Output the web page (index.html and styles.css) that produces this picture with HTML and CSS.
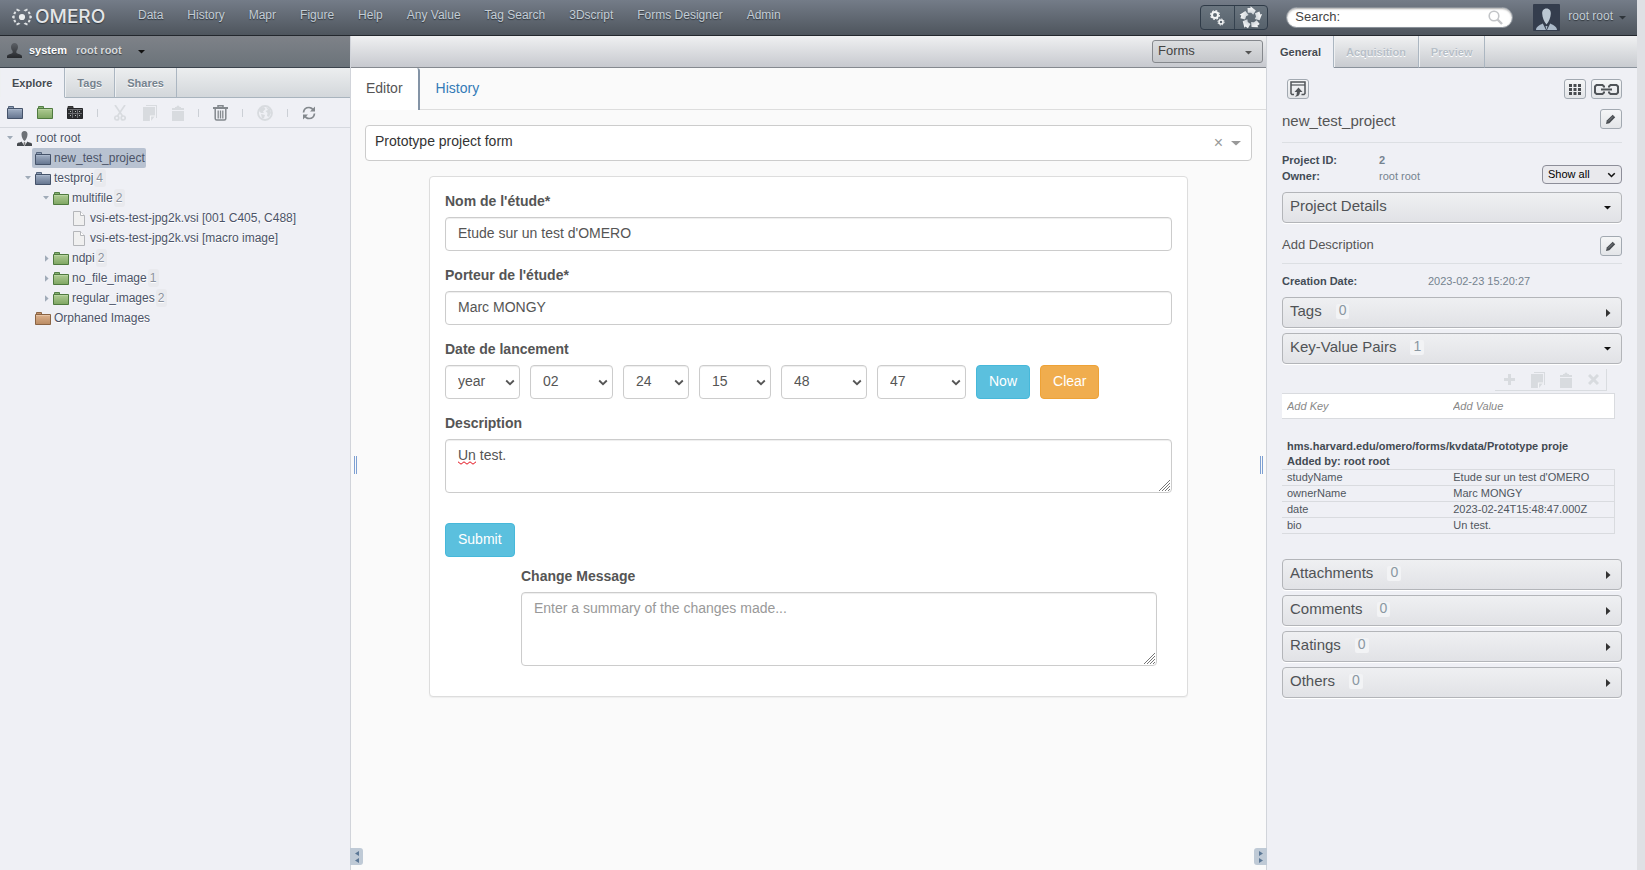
FILE: index.html
```html
<!DOCTYPE html>
<html lang="en">
<head>
<meta charset="utf-8">
<title>OMERO.web</title>
<link rel="stylesheet" href="styles.css">
</head>
<body>
<svg class="defs" aria-hidden="true">
  <defs>
    <linearGradient id="g-blue" x1="0" y1="0" x2="0" y2="1"><stop offset="0" stop-color="#a3b1c6"/><stop offset="1" stop-color="#64748e"/></linearGradient>
    <linearGradient id="g-green" x1="0" y1="0" x2="0" y2="1"><stop offset="0" stop-color="#b0cc94"/><stop offset="1" stop-color="#7ea662"/></linearGradient>
    <linearGradient id="g-tan" x1="0" y1="0" x2="0" y2="1"><stop offset="0" stop-color="#deb48f"/><stop offset="1" stop-color="#b98a62"/></linearGradient>
    <linearGradient id="g-dark" x1="0" y1="0" x2="0" y2="1"><stop offset="0" stop-color="#5c6066"/><stop offset="1" stop-color="#26292d"/></linearGradient>
    <linearGradient id="g-light" x1="0" y1="0" x2="0" y2="1"><stop offset="0" stop-color="#fff"/><stop offset="1" stop-color="#c6cdd3"/></linearGradient>
    <symbol id="folder-blue" viewBox="0 0 16 13"><path d="M1.500 3V.5h5V2.500" fill="#8b9cb4" stroke="#56657c"/><path d="M.5 2.500h15v10H.5z" fill="url(#g-blue)" stroke="#45536a"/><path d="M1 3.500h14" stroke="#a9b7cb"/></symbol>
    <symbol id="folder-green" viewBox="0 0 16 13"><path d="M1.500 3V.5h5V2.500" fill="#86b070" stroke="#558048"/><path d="M.5 2.500h15v10H.5z" fill="url(#g-green)" stroke="#4f7a3f"/><path d="M1 3.500h14" stroke="#b9d4a2"/></symbol>
    <symbol id="folder-tan" viewBox="0 0 16 13"><path d="M1.500 3V.5h5V2.500" fill="#c4936a" stroke="#8d6747"/><path d="M.5 2.500h15v10H.5z" fill="url(#g-tan)" stroke="#8a6444"/><path d="M1 3.500h14" stroke="#e6c3a4"/></symbol>
    <symbol id="folder-screen" viewBox="0 0 16 13"><path d="M1 3V.5h5V2.500" fill="#444" stroke="#333"/><path d="M.5 2.500h15v10H.5z" fill="#2c2e31" stroke="#232427"/><path d="M3 5h1v1H3zM8 5h1v1H8zM12 5h1v1h-1zM3 9h1v1H3zM8 9h1v1H8zM12 9h1v1h-1z" fill="#b9bfb8"/><path d="M5.500 3v9M10.500 3v9M1 7.500h14M1 3.500h14" stroke="#6b6c70"/></symbol>
    <symbol id="file" viewBox="0 0 12 15"><path d="M.5.5h7l4 4v10H.5z" fill="#f0f0f0" stroke="#b4b6ba"/><path d="M7.500.5v4h4" fill="#fff" stroke="#b4b6ba"/></symbol>
    <symbol id="person" viewBox="0 0 15 15"><path d="M7.500 0c2.300 0 3.600 1.700 3.500 4-.1 2-.9 3.300-1.600 4v2c1.500 1 5.600 1.200 5.600 3.500V15H0v-1.500C0 11.200 4.100 11 5.600 10V8C4.900 7.300 4 6 4 4c0-2.300 1.300-4 3.500-4z" fill="url(#g-dark)"/></symbol>
    <symbol id="user" viewBox="0 0 15 15"><path d="M7.500 0C9.500 0 10.600 1.400 10.500 3.500 10.400 6 9.200 9 7.500 10 5.800 9 4.600 6 4.500 3.500 4.400 1.400 5.500 0 7.500 0z" fill="#6d7176"/><path d="M0 15v-2c0-1.500 3-1.300 4.500-2.500L7.500 15zM15 15v-2c0-1.500-3-1.300-4.500-2.500L7.500 15z" fill="#45494e"/><path d="M7.500 10.500L8.500 12 7.500 15 6.500 12z" fill="#777"/></symbol>
    <symbol id="down" viewBox="0 0 8 5" preserveAspectRatio="none"><path d="M0 0h8L4 4.500z" fill="currentColor"/></symbol>
    <symbol id="right" viewBox="0 0 5 8"><path d="M0 0v8l4.500-4z" fill="currentColor"/></symbol>
    <symbol id="chevron" viewBox="0 0 10 7"><path d="M1.200 1.500L5 5.200l3.800-3.700" fill="none" stroke="currentColor" stroke-width="1.800"/></symbol>
    <symbol id="grip" viewBox="0 0 11 11"><path d="M0 11L11 0M3 11l8-8M6 11l5-5M9 11l2-2" stroke="#777" fill="none"/></symbol>
    <symbol id="pencil" viewBox="0 0 10 10"><path d="M0 10l.8-3.400L6.700.8 9.200 3.300 3.400 9.200z" fill="#484c50"/><path d="M2 7.500l5-5" stroke="#8d9196" stroke-width=".8"/></symbol>
    <symbol id="copy" viewBox="0 0 14 16"><path d="M3 0h11v13h-1V1H3z" fill="currentColor"/><path d="M0 2h12v9l-4 5H0z" fill="currentColor"/><path d="M7.500 16v-5H12" fill="none" stroke="#f4f5f7" stroke-width="1.200"/></symbol>
    <symbol id="paste" viewBox="0 0 12 16"><path d="M0 6h12v10H0zM0 3h3V2h1.500a1.500 1.500 0 0 1 3 0H9v1h3v2H0z" fill="currentColor"/></symbol>
  </defs>
</svg>

<div class="page">
  <header class="topbar">
    <a class="logo" href="#" aria-label="OMERO">
      <svg width="20" height="18" viewBox="0 0 20 18" aria-hidden="true">
        <circle cx="10" cy="9" r="3.100" fill="#eceeef"/>
        <g fill="#e0e3e5">
          <path d="M8.500 2.300L4.800.6l-.6 1.600L6.500 3.500zM11.500 2.300L15.200.6l.6 1.600-2.300 1.300zM8.500 15.700l-3.700 1.700-.6-1.600 2.300-1.300zM11.500 15.700l3.700 1.700.6-1.600-2.300-1.300z"/>
          <path d="M2.300 7.300Q3.300 9 2.300 10.700L.2 10V8zM17.700 7.300q-1 1.700 0 3.400L19.800 10V8z"/>
          <path d="M1.200 5.600l1.600-2.300 1.400.9-1 2.200zM18.800 5.600l-1.600-2.300-1.400.9 1 2.200zM1.200 12.400l1.600 2.300 1.400-.9-1-2.200zM18.800 12.400l-1.600 2.300-1.400-.9 1-2.200z"/>
        </g>
      </svg>
      <span class="logo-text">OMERO</span>
    </a>
    <nav class="mainnav">
      <a href="#">Data</a><a href="#">History</a><a href="#">Mapr</a><a href="#">Figure</a><a href="#">Help</a><a href="#">Any Value</a><a href="#">Tag Search</a><a href="#">3Dscript</a><a href="#">Forms Designer</a><a href="#">Admin</a>
    </nav>
    <div class="tools">
      <button type="button" aria-label="Scripts">
        <svg width="15" height="16" viewBox="0 0 15 16" fill="none" aria-hidden="true"><circle cx="5" cy="5" r="3" stroke="#f4f6f7" stroke-width="2"/><circle cx="5" cy="5" r="4.400" stroke="#f4f6f7" stroke-width="1.200" stroke-dasharray="1.800 1.650"/><circle cx="11" cy="12" r="2" stroke="#f4f6f7" stroke-width="1.500"/><circle cx="11" cy="12" r="3.100" stroke="#f4f6f7" stroke-dasharray="1.300 1.130"/></svg>
      </button>
      <button type="button" aria-label="Activities">
        <svg width="24" height="23" viewBox="0 0 24 23" fill="url(#g-light)" aria-hidden="true"><g id="piece"><path d="M8.500 2h3V.2l5.300 4.300-2.600 4.300-2-2H8.800z"/></g><use href="#piece" transform="rotate(72 12 12)"/><use href="#piece" transform="rotate(144 12 12)"/><use href="#piece" transform="rotate(216 12 12)"/><use href="#piece" transform="rotate(288 12 12)"/></svg>
      </button>
    </div>
    <form class="search">
      <input type="text" value="Search:" aria-label="Search">
      <svg width="15" height="15" viewBox="0 0 15 15" aria-hidden="true"><circle cx="6" cy="6" r="4.800" fill="none" stroke="#c3c5c8" stroke-width="1.600"/><path d="M9.500 9.500l4.500 4.500" stroke="#c3c5c8" stroke-width="2.400"/></svg>
    </form>
    <button type="button" class="account">
      <svg class="avatar" width="27" height="27" viewBox="0 0 27 27" aria-hidden="true"><rect width="27" height="27" rx="1" fill="#343d4d"/><path d="M13.500 4.500c3 0 4.500 2.300 4.300 5.300-.2 3.800-1.600 7.500-4.300 10.700-2.700-3.200-4.100-6.900-4.300-10.700-.2-3 1.300-5.300 4.300-5.300z" fill="#bcc8d3"/><path d="M3 26c.3-3.500 3-4.500 6.800-6.500L13 26zM24 26c-.3-3.500-3-4.500-6.800-6.500L14 26zM12.500 22h2l-1 4z" fill="#aab9c9"/></svg>
      <span>root root</span>
      <svg class="dark" width="7" height="4"><use href="#down"/></svg>
    </button>
  </header>

  <div class="columns">
    <aside class="left">
      <button type="button" class="group">
        <svg width="15" height="15"><use href="#person"/></svg>
        <strong>system</strong>
        <span>root root</span>
        <svg class="black" width="7" height="4"><use href="#down"/></svg>
      </button>
      <nav class="tabs left-tabs"><a class="active" href="#">Explore</a><a href="#">Tags</a><a href="#">Shares</a></nav>
      <div class="toolbar">
        <button type="button" aria-label="New project"><svg width="16" height="13"><use href="#folder-blue"/></svg></button>
        <button type="button" aria-label="New dataset"><svg width="16" height="13"><use href="#folder-green"/></svg></button>
        <button type="button" aria-label="New screen"><svg width="16" height="13"><use href="#folder-screen"/></svg></button>
        <i class="sep"></i>
        <button type="button" aria-label="Cut" disabled><svg width="12" height="16" viewBox="0 0 12 16" fill="none" stroke="currentColor" stroke-width="1.700"><path d="M1 0l7.500 11M11 0L3.500 11"/><circle cx="2.800" cy="13" r="2"/><circle cx="9.200" cy="13" r="2"/></svg></button>
        <button type="button" aria-label="Copy" disabled><svg width="14" height="16"><use href="#copy"/></svg></button>
        <button type="button" class="tight" aria-label="Paste" disabled><svg width="12" height="16"><use href="#paste"/></svg></button>
        <i class="sep"></i>
        <button type="button" class="grey tight" aria-label="Delete"><svg width="15" height="16" viewBox="0 0 15 16" fill="none" stroke="currentColor"><path d="M0 3h15" stroke-width="2"/><path d="M5 2V.7h5V2M2.200 4v9.500q0 1.500 1.500 1.500h7.600q1.500 0 1.500-1.500V4" stroke-width="1.500"/><path d="M5.200 5.500v8M7.500 5.500v8M9.800 5.500v8" stroke-width="1.300"/></svg></button>
        <i class="sep"></i>
        <button type="button" aria-label="Web link" disabled><svg width="16" height="16" viewBox="0 0 16 16"><circle cx="8" cy="8" r="7" fill="none" stroke="currentColor" stroke-width="1.800"/><path d="M3 3l4-1 1.500 2L6 6.500 7 8H4L2 6zM9 2.500L13 4l1 4-2 4-2-1 .5-3L8.500 6 11 5zM4 9l4 1-1 3-2 .5z" fill="currentColor"/></svg></button>
        <i class="sep"></i>
        <button type="button" class="grey tight" aria-label="Refresh"><svg width="14" height="14" viewBox="0 0 14 14" fill="none" stroke="currentColor" stroke-width="1.700"><path d="M1.500 6.500Q2 1.500 7 1.500q3 0 4.500 3M12.500 7.500q-.5 5-5.500 5-3 0-4.500-3"/><path d="M13 .5v5H8zM1 13.500v-5h5z" fill="currentColor" stroke="none"/></svg></button>
      </div>
      <ul class="tree">
        <li class="row"><span class="twist"><svg width="6" height="4"><use href="#down"/></svg></span><svg width="15" height="15"><use href="#user"/></svg><span>root root</span></li>
        <li class="row l1"><span class="twist"></span><a class="node selected" href="#"><svg width="16" height="13"><use href="#folder-blue"/></svg>new_test_project</a></li>
        <li class="row l1"><span class="twist"><svg width="6" height="4"><use href="#down"/></svg></span><a class="node" href="#"><svg width="16" height="13"><use href="#folder-blue"/></svg>testproj</a><span class="count">4</span></li>
        <li class="row l2"><span class="twist"><svg width="6" height="4"><use href="#down"/></svg></span><a class="node" href="#"><svg width="16" height="13"><use href="#folder-green"/></svg>multifile</a><span class="count">2</span></li>
        <li class="row l3"><span class="twist"></span><a class="node" href="#"><svg width="16" height="15"><use href="#file"/></svg>vsi-ets-test-jpg2k.vsi [001 C405, C488]</a></li>
        <li class="row l3"><span class="twist"></span><a class="node" href="#"><svg width="16" height="15"><use href="#file"/></svg>vsi-ets-test-jpg2k.vsi [macro image]</a></li>
        <li class="row l2"><span class="twist"><svg width="4" height="7"><use href="#right"/></svg></span><a class="node" href="#"><svg width="16" height="13"><use href="#folder-green"/></svg>ndpi</a><span class="count">2</span></li>
        <li class="row l2"><span class="twist"><svg width="4" height="7"><use href="#right"/></svg></span><a class="node" href="#"><svg width="16" height="13"><use href="#folder-green"/></svg>no_file_image</a><span class="count">1</span></li>
        <li class="row l2"><span class="twist"><svg width="4" height="7"><use href="#right"/></svg></span><a class="node" href="#"><svg width="16" height="13"><use href="#folder-green"/></svg>regular_images</a><span class="count">2</span></li>
        <li class="row l1"><span class="twist"></span><a class="node" href="#"><svg width="16" height="13"><use href="#folder-tan"/></svg>Orphaned Images</a></li>
      </ul>
    </aside>

    <main class="center">
      <div class="plugin-bar">
        <span class="pick plugin"><select aria-label="Center panel"><option>Forms</option></select><svg width="7" height="4"><use href="#down"/></svg></span>
      </div>
      <nav class="form-tabs"><a class="active" href="#">Editor</a><a href="#">History</a></nav>
      <div class="form-area">
        <div class="form-select">
          <input type="text" value="Prototype project form" aria-label="Form">
          <button type="button" aria-label="Clear form">×</button>
          <svg width="10" height="5"><use href="#down"/></svg>
        </div>
        <form class="panel">
          <div class="field">
            <label for="study">Nom de l'étude*</label>
            <input id="study" class="control" type="text" value="Etude sur un test d'OMERO">
          </div>
          <div class="field">
            <label for="owner">Porteur de l'étude*</label>
            <input id="owner" class="control" type="text" value="Marc MONGY">
          </div>
          <div class="field">
            <label for="year">Date de lancement</label>
            <div class="date">
              <span class="pick w-year"><select id="year" class="control"><option>year</option></select><svg width="10" height="7"><use href="#chevron"/></svg></span>
              <span class="pick w-month"><select class="control" aria-label="Month"><option>02</option></select><svg width="10" height="7"><use href="#chevron"/></svg></span>
              <span class="pick w-day"><select class="control" aria-label="Day"><option>24</option></select><svg width="10" height="7"><use href="#chevron"/></svg></span>
              <span class="pick w-hour"><select class="control" aria-label="Hour"><option>15</option></select><svg width="10" height="7"><use href="#chevron"/></svg></span>
              <span class="pick w-minute"><select class="control" aria-label="Minute"><option>48</option></select><svg width="10" height="7"><use href="#chevron"/></svg></span>
              <span class="pick w-second"><select class="control" aria-label="Second"><option>47</option></select><svg width="10" height="7"><use href="#chevron"/></svg></span>
              <button type="button" class="btn info">Now</button>
              <button type="button" class="btn warning">Clear</button>
            </div>
          </div>
          <div class="field">
            <label for="bio">Description</label>
            <div class="area">
              <textarea id="bio" class="control" rows="2" spellcheck="false">Un test.</textarea>
              <svg class="squiggle" width="18" height="4" viewBox="0 0 18 4"><path d="M0 .8l3 2.400 3-2.400 3 2.400 3-2.400 3 2.400 3-2.400" fill="none" stroke="#e3101c"/></svg>
              <svg class="grip" width="11" height="11"><use href="#grip"/></svg>
            </div>
          </div>
          <div class="submit"><button type="button" class="btn info">Submit</button></div>
          <div class="message">
            <label for="msg">Change Message</label>
            <div class="area">
              <textarea id="msg" class="control" rows="3" placeholder="Enter a summary of the changes made..."></textarea>
              <svg class="grip" width="11" height="11"><use href="#grip"/></svg>
            </div>
          </div>
        </form>
      </div>
      <i class="handle handle-left"></i>
      <i class="handle handle-right"></i>
      <button type="button" class="toggle toggle-left" aria-label="Collapse left panel"><svg width="4" height="12" viewBox="0 0 4 12"><path d="M4 0v5L0 2.500zM4 7v5L0 9.500z" fill="#5c7896"/></svg></button>
      <button type="button" class="toggle toggle-right" aria-label="Collapse right panel"><svg width="4" height="12" viewBox="0 0 4 12"><path d="M0 0v5l4-2.500zM0 7v5l4-2.500z" fill="#5c7896"/></svg></button>
    </main>

    <aside class="right">
      <nav class="tabs right-tabs"><a class="active" href="#">General</a><a class="off" href="#">Acquisition</a><a class="off" href="#">Preview</a></nav>
      <div class="details">
        <div class="actions">
          <button type="button" class="icon-btn" aria-label="Open with"><svg width="16" height="16" viewBox="0 0 16 16" fill="none" stroke="#505458"><path d="M4 13.500H2L1 12.500V1h14v11.500l-1 1h-2.500" stroke-width="1.500"/><path d="M1 4h14" stroke-width="1.200"/><path d="M8.500 6.500l4 4.500h-2.600Q10 15.500 5 15.700 7.200 14 6.900 11H4.500z" fill="#505458" stroke="none"/></svg></button>
          <span class="spacer"></span>
          <button type="button" class="icon-btn" aria-label="Bulk annotations"><svg width="12" height="11" viewBox="0 0 12 11" fill="#484b4f"><path d="M0 0h3v3H0zM4.500 0h3v3h-3zM9 0h3v3H9zM0 4h3v3H0zM4.500 4h3v3h-3zM9 4h3v3H9zM0 8h3v3H0zM4.500 8h3v3h-3zM9 8h3v3H9z"/></svg></button>
          <button type="button" class="icon-btn wide" aria-label="Link"><svg width="25" height="11" viewBox="0 0 25 11" fill="none" stroke="#505458" stroke-width="2"><path d="M10 3.500V2.500L8.500 1H2.500L1 2.500v6L2.500 10h6L10 8.500v-1M15 3.500V2.500L16.500 1h6L24 2.500v6L22.500 10h-6L15 8.500v-1M7 5.500h11"/></svg></button>
        </div>
        <div class="line title"><h1>new_test_project</h1><button type="button" class="icon-btn" aria-label="Edit name"><svg width="10" height="10"><use href="#pencil"/></svg></button></div>
        <div class="meta">
          <dl><dt>Project ID:</dt><dd><b>2</b></dd><dt>Owner:</dt><dd>root root</dd></dl>
          <span class="pick show"><select aria-label="Annotations shown"><option>Show all</option></select><svg width="9" height="6"><use href="#chevron"/></svg></span>
        </div>
        <button type="button" class="section first">Project Details<svg class="black" width="7" height="4"><use href="#down"/></svg></button>
        <div class="line desc"><span>Add Description</span><button type="button" class="icon-btn" aria-label="Edit description"><svg width="10" height="10"><use href="#pencil"/></svg></button></div>
        <dl class="created"><dt>Creation Date:</dt><dd>2023-02-23 15:20:27</dd></dl>
        <button type="button" class="section">Tags<span class="num">0</span><svg width="5" height="8"><use href="#right"/></svg></button>
        <button type="button" class="section">Key-Value Pairs<span class="num">1</span><svg class="black" width="7" height="4"><use href="#down"/></svg></button>
        <div class="kv-tools">
          <button type="button" disabled aria-label="Add"><svg width="11" height="11" viewBox="0 0 11 11"><path d="M5.500 0v11M0 5.500h11" stroke="currentColor" stroke-width="3"/></svg></button>
          <button type="button" disabled aria-label="Copy"><svg width="14" height="16"><use href="#copy"/></svg></button>
          <button type="button" disabled aria-label="Paste"><svg width="12" height="16"><use href="#paste"/></svg></button>
          <button type="button" disabled aria-label="Delete"><svg width="11" height="11" viewBox="0 0 11 11"><path d="M1 1l9 9M10 1l-9 9" stroke="currentColor" stroke-width="3"/></svg></button>
        </div>
        <div class="kv-add"><input type="text" placeholder="Add Key" aria-label="Add Key"><input type="text" placeholder="Add Value" aria-label="Add Value"></div>
        <table class="kv">
          <caption>hms.harvard.edu/omero/forms/kvdata/Prototype proje<br>Added by: root root</caption>
          <tbody>
            <tr><td>studyName</td><td>Etude sur un test d'OMERO</td></tr>
            <tr><td>ownerName</td><td>Marc MONGY</td></tr>
            <tr><td>date</td><td>2023-02-24T15:48:47.000Z</td></tr>
            <tr><td>bio</td><td>Un test.</td></tr>
          </tbody>
        </table>
        <button type="button" class="section">Attachments<span class="num">0</span><svg width="5" height="8"><use href="#right"/></svg></button>
        <button type="button" class="section">Comments<span class="num">0</span><svg width="5" height="8"><use href="#right"/></svg></button>
        <button type="button" class="section">Ratings<span class="num">0</span><svg width="5" height="8"><use href="#right"/></svg></button>
        <button type="button" class="section">Others<span class="num">0</span><svg width="5" height="8"><use href="#right"/></svg></button>
      </div>
    </aside>
  </div>
</div>
</body>
</html>
```
FILE: styles.css
```css
* { box-sizing: border-box; }
body {
  margin: 0;
  padding-right: 8px;
  background: #dfe0e4;
  color: #4b5367;
  font: 12px/20px "Liberation Sans", Arial, sans-serif;
}
button, input, select, textarea { font: inherit; color: inherit; margin: 0; }
button { background: none; border: 0; padding: 0; }
select { appearance: none; }
a { color: inherit; text-decoration: none; }
svg { display: block; flex: none; }
.defs { position: absolute; width: 0; height: 0; }
.page { display: flex; flex-direction: column; min-height: 100vh; }

/* top bar */
.topbar {
  display: flex;
  align-items: center;
  height: 36px;
  background: linear-gradient(#747c88, #4e555d);
  border-bottom: 1px solid #23272d;
  color: #c3cdd6;
  text-shadow: 0 1px 1px #30363c;
}
.logo { display: flex; align-items: center; gap: 3px; width: 126px; padding: 0 0 2px 12px; }
.logo-text { font: 500 19px/20px Inter, sans-serif; color: #e4e6e8; }
.mainnav { display: flex; flex: 1; padding-bottom: 5px; }
.mainnav a { padding: 0 12px; white-space: nowrap; }
.tools { display: flex; height: 25px; border: 1px solid #2f3b48; border-radius: 4px; background: linear-gradient(#6a757f, #56616b); }
.tools button { display: flex; align-items: center; justify-content: center; width: 33px; }
.tools button + button { border-left: 1px solid #35424f; }
.search {
  display: flex;
  align-items: center;
  width: 227px;
  height: 21px;
  margin-left: 18px;
  padding: 0 9px 0 8px;
  background: #fff;
  border: 1px solid #8a9199;
  border-radius: 11px;
  box-shadow: inset 0 1px 2px #aaa;
}
.search input { flex: 1; min-width: 0; border: 0; padding: 0 0 1px; background: none; font-size: 13px; color: #444; outline: 0; }
.account { display: flex; align-items: center; margin: 0 11px 0 20px; text-shadow: inherit; }
.account span { margin: 0 6px 4px 8px; }
.dark { color: #2f353b; }
.black { color: #111; }

.columns { display: grid; grid-template-columns: 351px 1fr 371px; flex: 1; }

/* shared tabs */
.tabs { display: flex; background: linear-gradient(#f0f1f2, #c7cacf); font-size: 11px; font-weight: bold; color: #75828e; text-shadow: 0 1px 0 #fff; }
.tabs a { padding: 0 12px; border-right: 1px solid #abb6c1; border-bottom: 1px solid #a9b4be; box-shadow: inset 1px 0 0 #eef0f2; }
.tabs::after { content: ""; flex: 1; border-bottom: 1px solid #a9b4be; }
.tabs a.active { background: #eff0f5; color: #454b52; border-bottom-color: #eff0f5; }

/* left panel */
.left { background: #eff0f5; border-right: 1px solid #d1d4da; }
.group {
  display: flex;
  align-items: center;
  width: 100%;
  height: 32px;
  padding: 0 0 3px 7px;
  background: linear-gradient(#7e8288, #6b737a);
  border-bottom: 1px solid #3b434c;
  color: #d6d9db;
  font-size: 11px;
  font-weight: bold;
  text-shadow: 0 1px 1px #3b4047;
}
.group strong { margin: 0 9px 0 7px; color: #fff; }
.group span { margin-right: 16px; }
.group .black { margin-top: 3px; }
.left-tabs { height: 30px; line-height: 31px; background: linear-gradient(#eceeef, #d2d6da); }
.toolbar { display: flex; align-items: center; height: 30px; padding: 0 6px 0 7px; border-bottom: 1px solid #d6d9df; gap: 14px; }
.toolbar button { display: flex; justify-content: center; width: 16px; }
.toolbar .tight { width: auto; }
.toolbar button:disabled, .kv-tools button:disabled { color: #d8dbdf; }
.toolbar .grey { color: #83888d; }
.sep { width: 1px; height: 8px; background: #cbcfd5; }
.tree { list-style: none; margin: 0; padding: 0; text-shadow: 0 1px 0 #fff; }
.row { display: flex; align-items: center; height: 20px; white-space: nowrap; }
.twist { display: flex; justify-content: center; width: 16px; padding-left: 3px; margin-right: 1px; color: #a0abb8; }
.l1 .twist, .l2 .twist { justify-content: flex-end; }
.row > span:nth-child(3):not(.count) { padding-left: 4px; }
.l1 { padding-left: 15px; }
.l2 { padding-left: 33px; }
.l3 { padding-left: 51px; }
.node { display: flex; align-items: center; gap: 3px; height: 20px; padding: 0 1px 0 3px; border-radius: 2px; }
.selected { background: #b8c2d1; text-shadow: none; }
.count { height: 18px; padding: 0 3px 0 2px; background: #e9eaee; border-radius: 3px; color: #8b919c; line-height: 18px; }

/* center */
.center { position: relative; background: #fafafa; color: #555; font-size: 14px; }
.plugin-bar { display: flex; justify-content: flex-end; height: 32px; padding: 4px 3px 4px 4px; background: linear-gradient(#eff0f1, #c7c9cf); border-bottom: 1px solid #85898f; }
.pick { position: relative; display: flex; }
.pick select { width: 100%; }
.pick svg { position: absolute; right: 5px; top: 14px; pointer-events: none; }
.plugin { width: 111px; }
.plugin select { height: 23px; padding: 0 5px 2px; border: 1px solid #85888d; border-radius: 3px; background: linear-gradient(#dcdee0, #c5c7cb); font-size: 13px; color: #444; }
.plugin svg { right: 11px; top: 11px; }
.form-tabs { display: flex; height: 42px; border-bottom: 1px solid #ddd; line-height: 40px; color: #337ab7; }
.form-tabs a { padding: 0 16px; }
.form-tabs .active { height: 42px; padding: 0 15px; background: #fff; color: #555; border-right: 2px solid #8494a6; border-radius: 0 3px 0 0; }
.form-area { padding: 15px 14px 0; }
.form-select { display: flex; align-items: center; height: 36px; padding: 0 10px 0 9px; background: #fff; border: 1px solid #ccc; border-radius: 4px; }
.form-select input { flex: 1; min-width: 0; border: 0; padding: 0 0 4px; background: none; color: #333; outline: 0; }
.form-select button { margin-right: 8px; color: #999; font-size: 16px; }
.form-select svg { color: #999; }
.panel { margin: 15px 64px 20px; padding: 14px 15px 30px; background: #fff; border: 1px solid #ddd; border-radius: 4px; box-shadow: 0 1px 1px #eee; }
.field { margin-bottom: 14px; }
label { display: block; margin-bottom: 6px; font-weight: bold; }
.control { display: block; width: 100%; height: 34px; padding: 6px 12px 8px; border: 1px solid #ccc; border-radius: 4px; background: #fff; box-shadow: inset 0 1px 1px #eee; line-height: 18px; resize: none; outline: 0; }
textarea.control { height: auto; min-height: 54px; padding: 5px 12px 7px; line-height: 20px; }
.control::placeholder { color: #999; }
select.control { padding-right: 20px; }
.date { display: flex; flex-wrap: wrap; gap: 10px; }
.w-year { width: 75px; }
.w-month { width: 83px; }
.w-day { width: 66px; }
.w-hour { width: 72px; }
.w-minute { width: 86px; }
.w-second { width: 89px; }
.btn { height: 34px; padding: 0 12px 3px; border: 1px solid; border-radius: 4px; color: #fff; }
.info { background: #5bc0de; border-color: #46b8da; }
.warning { background: #f0ad4e; border-color: #eea236; }
.area { position: relative; }
.grip { position: absolute; right: 2px; bottom: 2px; }
.squiggle { position: absolute; left: 13px; top: 22px; }
.submit { margin: 30px 0 9px; }
.message { margin: 0 15px 0 76px; }
.handle { position: absolute; top: 420px; width: 3px; height: 18px; border: solid #7ea0d2; border-width: 0 1px; }
.handle-left { left: 3px; }
.handle-right { right: 3px; }
.toggle { position: absolute; bottom: 5px; display: flex; align-items: center; justify-content: center; width: 13px; height: 17px; background: #bfcad6; }
.toggle-left { left: -1px; border-radius: 0 3px 3px 0; }
.toggle-right { right: -1px; border-radius: 3px 0 0 3px; }

/* right panel */
.right { background: #eff0f5; border-left: 1px solid #d1d4da; }
.right-tabs { height: 32px; line-height: 33px; }
.right-tabs a, .right-tabs::after { border-bottom-color: #8a929b; }
.right-tabs .active { padding-left: 13px; }
.right-tabs .off { color: #b7bfc8; }
.details { padding: 11px 15px 20px; color: #555; }
.icon-btn { display: flex; align-items: center; justify-content: center; width: 22px; height: 20px; border: 1px solid #a2a9b1; border-radius: 3px; background: linear-gradient(#f5f6f7, #e3e5e8); }
.wide { width: 31px; }
.actions { display: flex; gap: 5px; padding-left: 5px; }
.spacer { flex: 1; }
.line { display: flex; justify-content: space-between; align-items: flex-start; border-bottom: 1px solid #dcdfe3; }
.title { height: 34px; margin-top: 10px; }
.desc { height: 28px; font-size: 13px; }
.desc span { line-height: 18px; }
h1 { margin: 2px 0 0; font-size: 15px; font-weight: normal; color: #555; }
.meta { display: flex; justify-content: space-between; align-items: flex-start; height: 49px; padding-top: 9px; }
dl { display: grid; grid-template-columns: 97px auto; margin: 0; font-size: 11px; line-height: 16px; }
dt { font-weight: bold; color: #434c56; }
dd { margin: 0; color: #75838f; }
.show { width: 80px; height: 19px; margin-top: 13px; }
.show select { height: 19px; padding: 0 5px 2px; border: 1px solid #8d8e99; border-radius: 4px; background: #e9e9ed; font-size: 11px; line-height: 16px; color: #000; }
.show svg { top: 7px; right: 6px; color: #111; }
.section { display: flex; align-items: center; width: 100%; height: 31px; margin-bottom: 5px; padding: 0 10px 3px 7px; border: 1px solid #b3b5b9; border-radius: 4px; background: linear-gradient(#eff0f2, #e1e2e6); box-shadow: 0 1px 0 #fff; font-size: 15px; color: #505356; }
.section svg { margin: 3px 0 0 auto; color: #333; }
.section .black { color: #111; }
.section.first { margin-bottom: 13px; }
.num { margin-left: 14px; padding: 0 3px; height: 15px; background: #f2f3f5; border-radius: 2px; color: #8a97a2; font-size: 14px; line-height: 13px; }
.created { grid-template-columns: 146px auto; padding: 9px 0 8px; }
.kv-tools { display: flex; align-items: center; justify-content: space-between; width: 112px; height: 22px; margin: 0 15px 2px auto; padding: 0 7px 0 9px; border: solid #d9dce0; border-width: 0 1px 1px 0; }
.kv-add { display: grid; grid-template-columns: 1fr 1fr; margin-right: 7px; height: 26px; background: #fff; border: solid #d9dbdf; border-width: 1px 1px 1px 0; }
.kv-add input { min-width: 0; border: 0; padding: 0 5px; background: none; font-size: 11px; font-style: italic; outline: 0; }
.kv-add input::placeholder { color: #888; }
.kv { width: calc(100% - 7px); margin: 20px 0 25px; border-collapse: collapse; border-right: 1px solid #d9dbdf; table-layout: fixed; font-size: 11px; line-height: 15px; color: #4f565e; }
.kv caption { padding-left: 5px; text-align: left; font-weight: bold; color: #434a52; white-space: nowrap; }
.kv td { padding: 0 5px; border: solid #d9dbdf; border-width: 1px 0; }
```
